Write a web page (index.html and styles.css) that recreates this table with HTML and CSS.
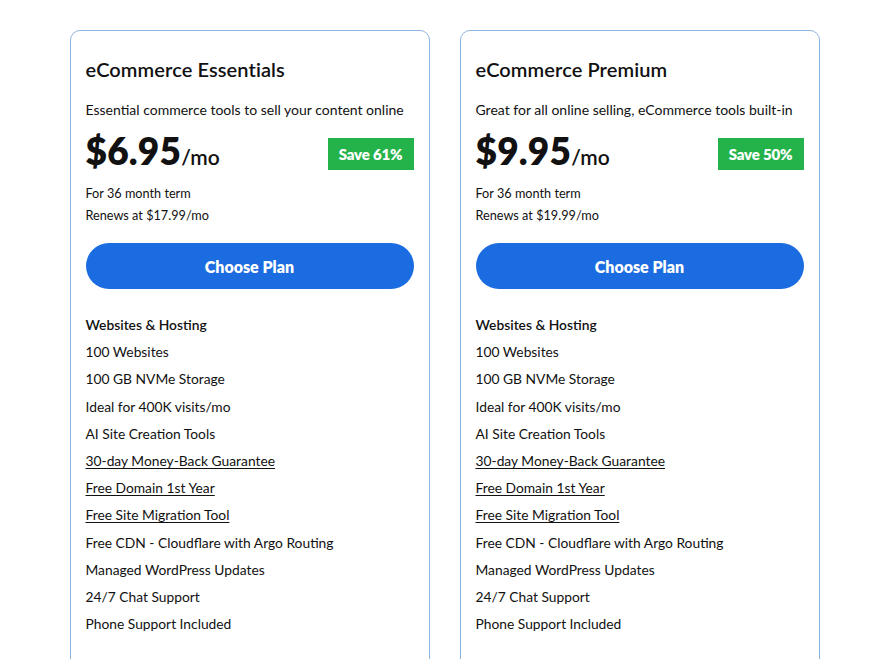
FILE: index.html
```html
<!DOCTYPE html>
<html>
<head>
<meta charset="utf-8">
<link rel="stylesheet" href="styles.css">
</head>
<body>
<div class="plans">
  <div class="card">
    <h2 class="title">eCommerce Essentials</h2>
    <p class="desc">Essential commerce tools to sell your content online</p>
    <div class="price-row">
      <div class="price"><span class="amount">$6.95</span><span class="per">/mo</span></div>
      <span class="save">Save 61%</span>
    </div>
    <p class="term">For 36 month term</p>
    <p class="term">Renews at $17.99/mo</p>
    <button class="choose">Choose Plan</button>
    <ul class="features">
      <li class="head">Websites &amp; Hosting</li>
      <li>100 Websites</li>
      <li>100 GB NVMe Storage</li>
      <li>Ideal for 400K visits/mo</li>
      <li>AI Site Creation Tools</li>
      <li><a href="#">30-day Money-Back Guarantee</a></li>
      <li><a href="#">Free Domain 1st Year</a></li>
      <li><a href="#">Free Site Migration Tool</a></li>
      <li>Free CDN - Cloudflare with Argo Routing</li>
      <li>Managed WordPress Updates</li>
      <li>24/7 Chat Support</li>
      <li>Phone Support Included</li>
    </ul>
  </div>
  <div class="card">
    <h2 class="title">eCommerce Premium</h2>
    <p class="desc">Great for all online selling, eCommerce tools built-in</p>
    <div class="price-row">
      <div class="price"><span class="amount">$9.95</span><span class="per">/mo</span></div>
      <span class="save">Save 50%</span>
    </div>
    <p class="term">For 36 month term</p>
    <p class="term">Renews at $19.99/mo</p>
    <button class="choose">Choose Plan</button>
    <ul class="features">
      <li class="head">Websites &amp; Hosting</li>
      <li>100 Websites</li>
      <li>100 GB NVMe Storage</li>
      <li>Ideal for 400K visits/mo</li>
      <li>AI Site Creation Tools</li>
      <li><a href="#">30-day Money-Back Guarantee</a></li>
      <li><a href="#">Free Domain 1st Year</a></li>
      <li><a href="#">Free Site Migration Tool</a></li>
      <li>Free CDN - Cloudflare with Argo Routing</li>
      <li>Managed WordPress Updates</li>
      <li>24/7 Chat Support</li>
      <li>Phone Support Included</li>
    </ul>
  </div>
</div>
</body>
</html>
```
FILE: styles.css
```css
* { box-sizing: border-box; }
html, body { margin: 0; padding: 0; background: #fff; }
body {
  font-family: "Lato", "Liberation Sans", sans-serif;
  color: #111;
  overflow: hidden;
  height: 659px;
}
.plans {
  display: flex;
  justify-content: center;
  gap: 30px;
  padding-top: 30px;
  padding-left: 1px;
}
.card {
  width: 360px;
  height: 700px;
  border: 1px solid #8fb6df;
  border-radius: 10px;
  padding: 26px 15px 0 15px;
}
.title {
  margin: 0;
  font-size: 20px;
  font-weight: 600;
  line-height: 24px;
  letter-spacing: 0.1px;
}
.desc {
  margin: 19px 0 0;
  font-size: 14px;
  line-height: 20px;
}
.price-row {
  display: flex;
  justify-content: space-between;
  align-items: flex-start;
  margin-top: 18px;
  height: 32px;
}
.price { line-height: 26px; white-space: nowrap; }
.amount {
  font-size: 37px;
  font-weight: 800;
  letter-spacing: 0.2px;
}
.per {
  font-size: 21px;
  font-weight: 600;
}
.save {
  background: #24b34b;
  color: #fff;
  font-weight: 800;
  font-size: 15px;
  width: 86px;
  height: 32px;
  display: flex;
  align-items: center;
  justify-content: center;
  letter-spacing: -0.2px;
}
.term {
  margin: 0;
  font-size: 12.7px;
  line-height: 22px;
}
.price-row + .term { margin-top: 12px; }
.choose {
  display: block;
  width: 100%;
  height: 46px;
  margin-top: 17px;
  border: none;
  border-radius: 23px;
  background: #1a6ce0;
  color: #fff;
  font-family: inherit;
  font-size: 16px;
  font-weight: 800;
}
.features {
  list-style: none;
  margin: 22px 0 0;
  padding: 0;
}
.features li {
  font-size: 13.8px;
  line-height: 27.2px;
}
.features li.head { font-weight: 600; }
.features a { color: inherit; text-decoration: underline; text-underline-offset: 2px; }
```
